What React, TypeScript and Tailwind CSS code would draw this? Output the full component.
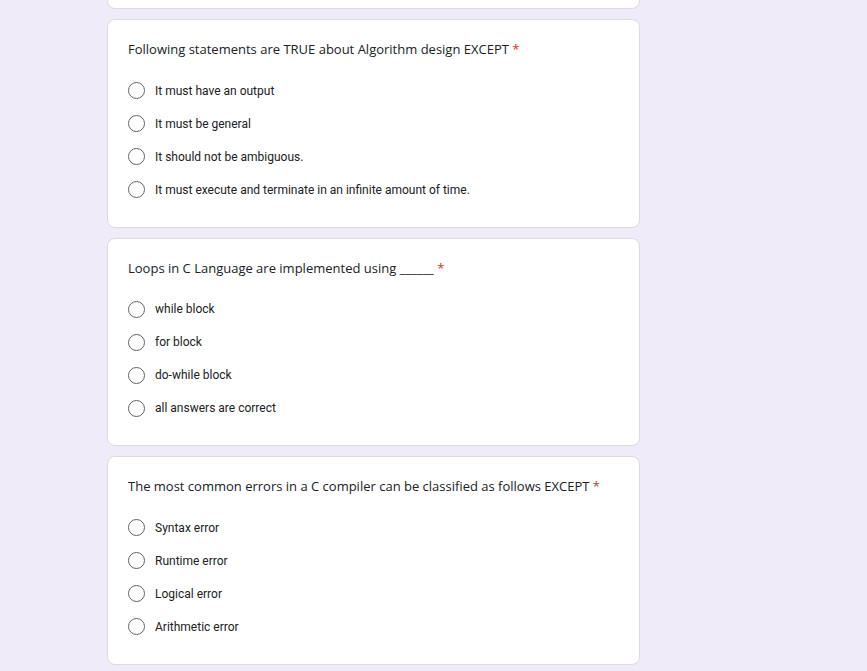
const QUESTIONS = [
  {
    title: 'Following statements are TRUE about Algorithm design EXCEPT',
    options: [
      'It must have an output',
      'It must be general',
      'It should not be ambiguous.',
      'It must execute and terminate in an infinite amount of time.',
    ],
  },
  {
    title: 'Loops in C Language are implemented using ______',
    options: ['while block', 'for block', 'do-while block', 'all answers are correct'],
  },
  {
    title: 'The most common errors in a C compiler can be classified as follows EXCEPT',
    options: ['Syntax error', 'Runtime error', 'Logical error', 'Arithmetic error'],
  },
];

export default function App() {
  return (
    <div className="min-h-[671px] bg-[#f0ebf8] pl-[107px]">
      <div className="flex w-[533px] flex-col gap-[10px]">
        <div className="h-[9px] rounded-b-lg border border-t-0 border-[#dadce0] bg-white" />
        {QUESTIONS.map(q => (
          <div key={q.title} className="rounded-lg border border-[#dadce0] bg-white px-5 pt-[21px] pb-[20.5px]">
            <div className="text-[13px] leading-4 text-[#202124]" style={{ fontFamily: '"Open Sans", sans-serif' }}>
              {q.title} <span className="text-[#d93025]">*</span>
            </div>
            <div className="mt-[17px] flex flex-col">
              {q.options.map(o => (
                <label key={o} className="flex h-[33px] items-center gap-[10px]">
                  <span className="h-[17px] w-[17px] rounded-full border-[1.5px] border-[#5f6368]" />
                  <span className="text-[12px] text-[#202124]" style={{ fontFamily: 'Roboto, sans-serif' }}>{o}</span>
                </label>
              ))}
            </div>
          </div>
        ))}
      </div>
    </div>
  );
}
